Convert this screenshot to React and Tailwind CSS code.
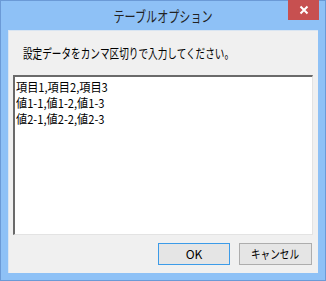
export default function App() {
  const font = { fontFamily: '"Noto Sans CJK JP", "Noto Sans", sans-serif' };
  return (
    <div className="w-[326px] h-[281px] bg-[#8ec1f6] border border-[#6b9ad6] flex flex-col" style={font}>
      <div className="h-[29px] relative flex items-center justify-center shrink-0">
        <span className="inline-block text-[15px] text-[#222] leading-none mt-[-1px] scale-x-[0.74]">テーブルオプション</span>
        <div className="absolute right-[6px] top-[-1px] w-[31px] h-[20px] bg-[#c75050] flex items-center justify-center">
          <svg width="10" height="10" viewBox="0 0 10 10">
            <path d="M1.5 1.5 L8.5 8.5 M8.5 1.5 L1.5 8.5" stroke="#fff" strokeWidth="2" />
          </svg>
        </div>
      </div>
      <div className="mx-[7px] mb-[7px] flex-1 bg-[#f0f0f0] border-t border-l border-[#d9e5f2] flex flex-col">
        <div className="h-[44px] pl-[14px] flex items-center text-[13px] text-black">
          <span className="inline-block origin-left scale-x-[0.74]">設定データをカンマ区切りで入力してください。</span>
        </div>
        <div className="ml-[4px] mr-[5px] h-[160px] bg-white border-t-2 border-l-2 border-t-[#6a6a6a] border-l-[#6a6a6a] border-r border-b border-r-[#e3e3e3] border-b-[#e3e3e3] pl-[1px] pt-[2px] text-[12px] leading-[16px] text-black">
          <div className="origin-left scale-x-[0.93]">項目1,項目2,項目3</div>
          <div className="origin-left scale-x-[0.93]">値1-1,値1-2,値1-3</div>
          <div className="origin-left scale-x-[0.93]">値2-1,値2-2,値2-3</div>
        </div>
        <div className="flex justify-end gap-[9px] mt-[8px] mr-[6px]">
          <button className="w-[72px] h-[22px] bg-[#e5e5e5] border border-[#3c9be8] text-[12px] text-black flex items-center justify-center">OK</button>
          <button className="w-[73px] h-[22px] bg-[#e5e5e5] border border-[#adadad] text-[12px] text-black flex items-center justify-center">
            <span className="inline-block scale-x-[0.8]">キャンセル</span>
          </button>
        </div>
      </div>
    </div>
  );
}
